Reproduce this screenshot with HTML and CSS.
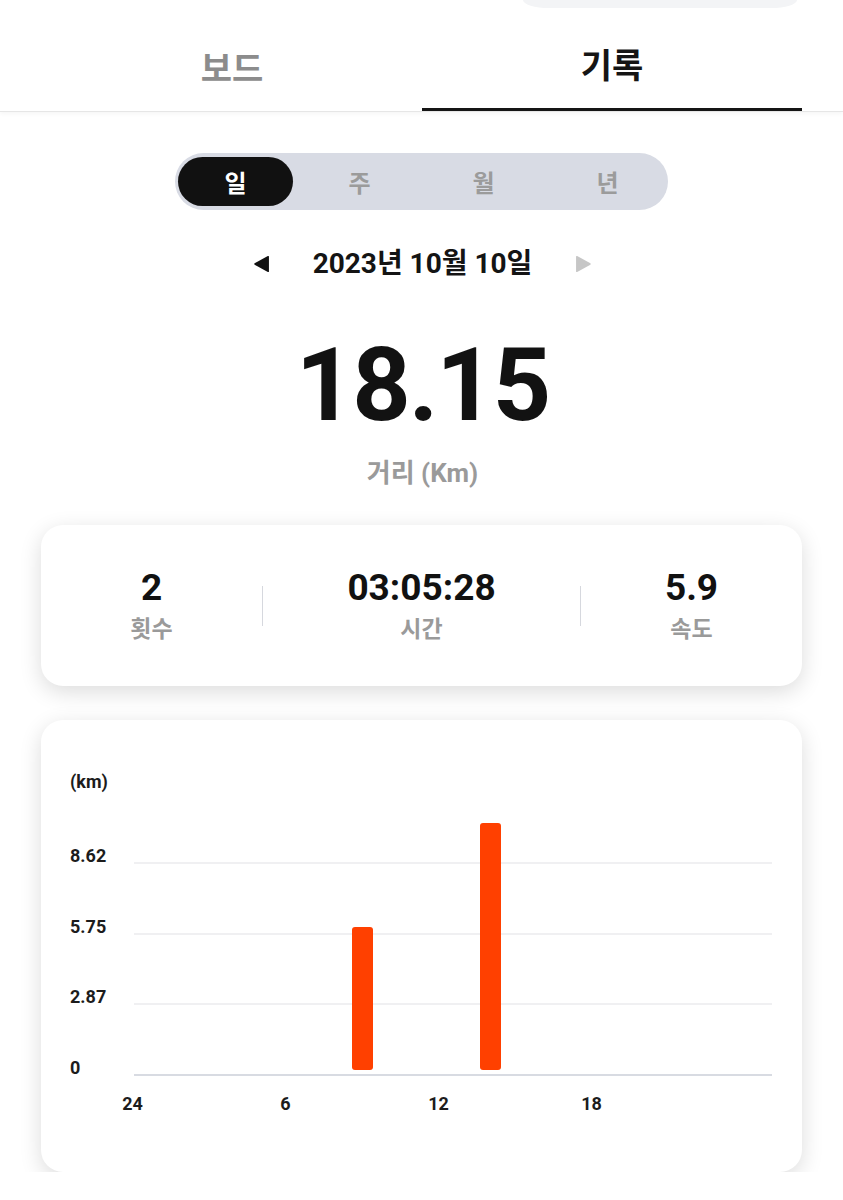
FILE: index.html
```html
<!DOCTYPE html>
<html lang="ko">
<head>
<meta charset="utf-8">
<title>기록</title>
<link rel="stylesheet" href="styles.css">
</head>
<body>
<header class="header">
  <div class="top-pill"></div>
  <nav class="tabs">
    <div class="tab">보드</div>
    <div class="tab tab-active">기록</div>
  </nav>
</header>

<div class="segment">
  <div class="seg seg-active">일</div>
  <div class="seg">주</div>
  <div class="seg">월</div>
  <div class="seg">년</div>
</div>

<div class="date-nav">
  <svg class="arrow" width="17" height="18" viewBox="0 0 16 17"><path d="M15 1.5 L15 15.5 Q15 16.5 14 16 L1.5 9.2 Q0.8 8.5 1.5 7.8 L14 1 Q15 0.5 15 1.5 Z" fill="#111"/></svg>
  <div class="date">2023년 10월 10일</div>
  <svg class="arrow" width="17" height="18" viewBox="0 0 16 17"><path d="M1 1.5 L1 15.5 Q1 16.5 2 16 L14.5 9.2 Q15.2 8.5 14.5 7.8 L2 1 Q1 0.5 1 1.5 Z" fill="#c6c6c6"/></svg>
</div>

<div class="distance">18.15</div>
<div class="distance-label">거리 (Km)</div>

<section class="card stats">
  <div class="stat">
    <div class="stat-value">2</div>
    <div class="stat-label">횟수</div>
  </div>
  <div class="divider"></div>
  <div class="stat">
    <div class="stat-value">03:05:28</div>
    <div class="stat-label">시간</div>
  </div>
  <div class="divider"></div>
  <div class="stat">
    <div class="stat-value">5.9</div>
    <div class="stat-label">속도</div>
  </div>
</section>

<section class="card chart">
  <div class="unit">(km)</div>
  <div class="plot">
    <div class="row"><span class="ylabel">8.62</span><span class="gridline"></span></div>
    <div class="row"><span class="ylabel">5.75</span><span class="gridline"></span></div>
    <div class="row"><span class="ylabel">2.87</span><span class="gridline"></span></div>
    <div class="row"><span class="ylabel">0</span><span class="gridline base"></span></div>
    <div class="bars">
      <div class="bar" style="left:218px;height:143px"></div>
      <div class="bar" style="left:346px;height:247px"></div>
    </div>
  </div>
  <div class="xaxis">
    <span class="xlabel">24</span>
    <span class="xlabel">6</span>
    <span class="xlabel">12</span>
    <span class="xlabel">18</span>
  </div>
</section>
</body>
</html>
```

FILE: styles.css
```css
* { box-sizing: border-box; }

body {
  margin: 0;
  background: #ffffff;
  font-family: Roboto, "Noto Sans CJK KR", sans-serif;
  color: #111111;
  width: 843px;
}

.header {
  border-bottom: 1px solid #e6e6e6;
  box-shadow: 0 2px 4px rgba(0, 0, 0, 0.04);
}

.top-pill {
  width: 274px;
  height: 8px;
  margin-left: 523px;
  background: #f3f4f6;
  border-radius: 0 0 26px 26px / 0 0 8px 8px;
}

.tabs {
  display: flex;
  padding: 0 41px 0 42px;
}

.tab {
  flex: 1;
  height: 103px;
  display: flex;
  align-items: center;
  justify-content: center;
  padding-top: 13px;
  font-size: 34px;
  font-weight: 700;
  color: #8c8c8c;
  font-family: "Noto Sans CJK KR", sans-serif;
}

.tab-active {
  color: #151515;
  border-bottom: 3px solid #151515;
  padding-top: 10px;
}

.segment {
  width: 493px;
  height: 57px;
  margin: 41px auto 0;
  padding: 4px 3px;
  background: #d8dbe4;
  border-radius: 29px;
  display: flex;
  gap: 9px;
}

.seg {
  width: 115px;
  display: flex;
  align-items: center;
  justify-content: center;
  font-size: 24px;
  font-weight: 700;
  color: #9b9b9b;
  border-radius: 25px;
  font-family: "Noto Sans CJK KR", sans-serif;
}

.seg-active {
  background: #111111;
  color: #ffffff;
}

.date-nav {
  margin-top: 37px;
  display: flex;
  align-items: center;
  justify-content: center;
  gap: 43px;
  height: 34px;
  padding-left: 2px;
}

.date {
  font-size: 28px;
  font-weight: 700;
  line-height: 34px;
  color: #141414;
}

.arrow { display: block; }

.distance {
  margin-top: 53px;
  text-align: center;
  font-size: 102px;
  line-height: 102px;
  font-weight: 700;
  letter-spacing: -2px;
  color: #121212;
  padding-left: 2px;
}

.distance-label {
  margin-top: 21px;
  text-align: center;
  font-size: 26px;
  line-height: 32px;
  font-weight: 700;
  color: #9a9a9a;
  padding-left: 2px;
}

.card {
  margin: 0 41px;
  background: #ffffff;
  border-radius: 22px;
  box-shadow: 0 6px 22px rgba(0, 0, 0, 0.14);
}

.stats {
  margin-top: 36px;
  height: 161px;
  display: grid;
  grid-template-columns: 221px 1px 1fr 1px 221px;
  align-items: center;
}

.stat {
  display: flex;
  flex-direction: column;
  align-items: center;
}

.stat-value {
  font-size: 37px;
  line-height: 42px;
  font-weight: 700;
  color: #111111;
}

.stat-label {
  margin-top: 6px;
  font-size: 23px;
  line-height: 30px;
  font-weight: 700;
  color: #9a9a9a;
}

.divider {
  height: 40px;
  width: 1px;
  background: #d6d8de;
}

.chart {
  margin-top: 34px;
  height: 452px;
  padding: 51px 30px 0 29px;
}

.unit {
  font-size: 18px;
  line-height: 22px;
  font-weight: 700;
  color: #1c1c1c;
}

.plot {
  position: relative;
}

.row {
  height: 70.5px;
  display: grid;
  grid-template-columns: 64px 1fr;
}

.row:first-child { height: 71px; }

.ylabel {
  align-self: end;
  font-size: 18px;
  line-height: 18px;
  font-weight: 700;
  color: #1c1c1c;
  margin-bottom: -1px;
}

.gridline {
  border-bottom: 2px solid #f0f0f2;
}

.gridline.base {
  border-bottom-color: #d8dbe2;
}

.bars {
  position: absolute;
  left: 64px;
  right: 0;
  top: 0;
  bottom: 6px;
}

.bar {
  position: absolute;
  bottom: 0;
  width: 21px;
  background: #ff4000;
  border-radius: 3px;
}

.xaxis {
  display: flex;
  margin-top: 17px;
  margin-left: -14px;
}

.xlabel {
  width: 153px;
  flex: none;
  text-align: center;
  font-size: 18px;
  line-height: 22px;
  font-weight: 700;
  color: #1c1c1c;
}
```
